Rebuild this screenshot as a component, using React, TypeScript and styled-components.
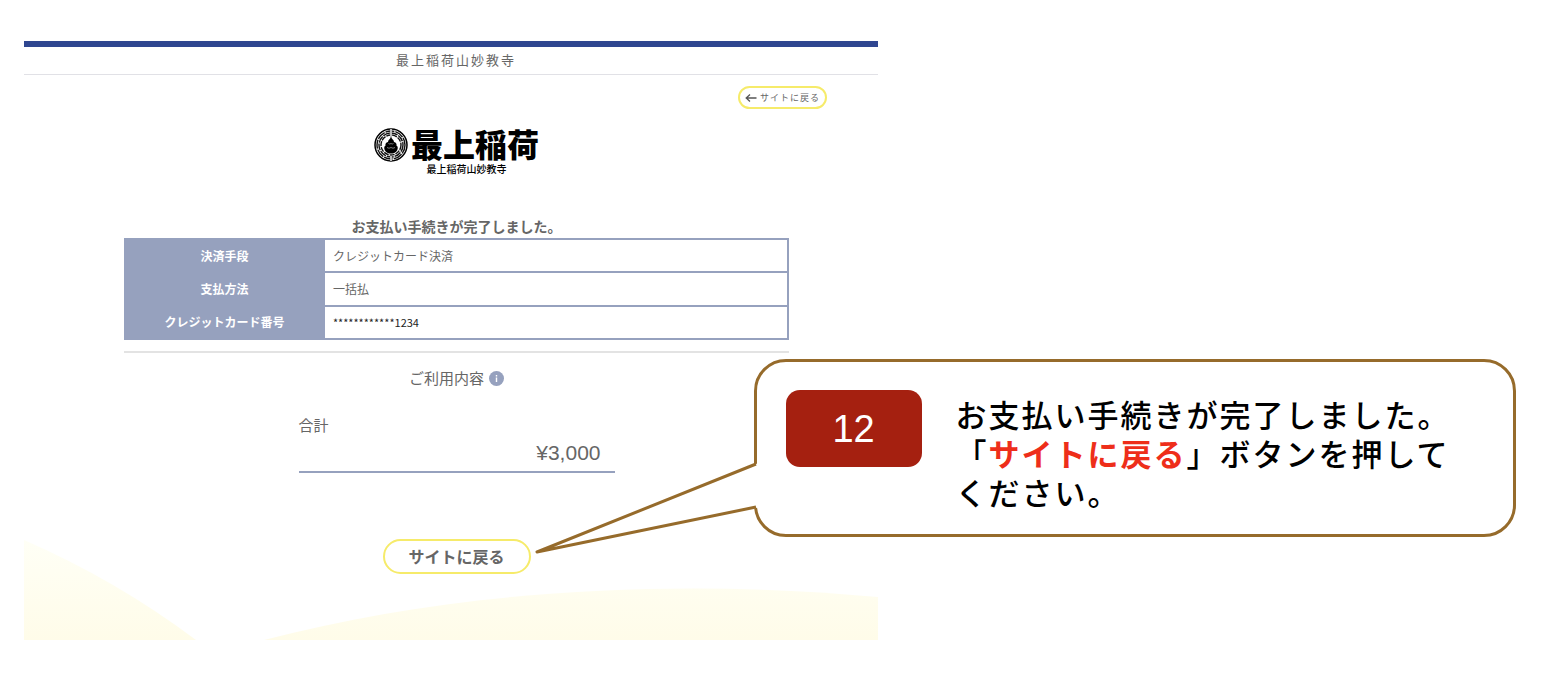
import React from 'react';
import styled, { createGlobalStyle } from 'styled-components';

const color = {
  navy: '#2f4690',
  slate: '#96a1be',
  text: '#666666',
  yellow: '#f6eb6a',
  brown: '#966b2b',
  badge: '#a52010',
  red: '#ee2e1a',
};

const GlobalStyle = createGlobalStyle`
  * { box-sizing: border-box; }
  body {
    margin: 0;
    background: #ffffff;
    color: ${color.text};
    font-family: "Noto Sans CJK JP", sans-serif;
  }
`;

const Slide = styled.div`
  position: relative;
  display: grid;
  grid-template-columns: 427fr 323fr;
  padding: 41px 24px 40px;
`;

const Screen = styled.main`
  position: relative;
  display: flex;
  flex-direction: column;
  padding-bottom: 66px;
  isolation: isolate;
`;

const Waves = styled.svg`
  position: absolute;
  left: 0;
  bottom: 0;
  width: 100%;
  height: 100px;
  z-index: -1;
`;

const SiteHeader = styled.header`
  border-top: 6px solid ${color.navy};
  border-bottom: 1px solid #e1e1e6;
  padding: 0 0 2px 10px;
  font-size: 13px;
  line-height: 25px;
  letter-spacing: 2px;
  text-align: center;
`;

const Toolbar = styled.nav`
  display: flex;
  justify-content: flex-end;
  padding: 11px 51px 0 0;
`;

const PillButton = styled.button<{ $large?: boolean }>`
  display: inline-flex;
  align-items: center;
  justify-content: center;
  gap: 3px;
  width: ${(p) => (p.$large ? 148 : 89)}px;
  height: ${(p) => (p.$large ? 35 : 23)}px;
  padding: 0 0 ${(p) => (p.$large ? 2 : 0)}px;
  border: 2px solid ${color.yellow};
  border-radius: 18px;
  background: #ffffff;
  color: ${color.text};
  font-family: inherit;
  font-size: ${(p) => (p.$large ? 16 : 9)}px;
  font-weight: ${(p) => (p.$large ? 700 : 400)};
  letter-spacing: ${(p) => (p.$large ? 0 : 1)}px;
  white-space: nowrap;
`;

const Content = styled.div`
  display: flex;
  flex-direction: column;
  align-items: center;
  padding: 19px 89px 0 100px;
`;

const Logo = styled.div`
  display: flex;
  flex-direction: column;
  align-items: center;
  color: #000000;
`;

const LogoRow = styled.div`
  display: flex;
  align-items: center;
  gap: 3px;
  height: 34px;
`;

const LogoName = styled.span`
  padding-bottom: 4px;
  font-size: 32px;
  font-weight: 900;
  line-height: 32px;
  white-space: nowrap;
`;

const LogoCaption = styled.span`
  margin-left: 20px;
  font-size: 10px;
  font-weight: 500;
  line-height: 14px;
`;

const Message = styled.h1`
  margin: 40px 0 0;
  padding-bottom: 2px;
  font-size: 14px;
  font-weight: 700;
  line-height: 20px;
`;

const PaymentTable = styled.table`
  width: 100%;
  height: 102px;
  border-collapse: collapse;
  border: 2px solid ${color.slate};
  font-size: 12px;
  line-height: 18px;
`;

const Label = styled.th`
  width: 30%;
  padding: 0;
  background: ${color.slate};
  color: #ffffff;
  font-weight: 700;
`;

const Value = styled.td<{ $number?: boolean }>`
  padding: 0 8px;
  border: 2px solid ${color.slate};
  color: ${(p) => (p.$number ? '#222222' : color.text)};
  font-size: ${(p) => (p.$number ? 11 : 12)}px;
`;

const Divider = styled.hr`
  width: 100%;
  height: 2px;
  margin: 11px 0 0;
  border: 0;
  background: #e3e3e3;
`;

const UsageTitle = styled.h2`
  display: flex;
  align-items: center;
  gap: 5px;
  margin: 14px 0 0;
  font-size: 15px;
  font-weight: 400;
  line-height: 22px;
`;

const Total = styled.dl`
  display: flex;
  flex-direction: column;
  width: 316px;
  margin: 25px 0 66px;
  border-bottom: 2px solid ${color.slate};
`;

const TotalLabel = styled.dt`
  font-size: 15px;
  line-height: 22px;
`;

const TotalAmount = styled.dd`
  margin: 0;
  padding: 5px 14px 6px 0;
  font-family: "Liberation Sans", Arial, sans-serif;
  font-size: 21px;
  line-height: 24px;
  text-align: right;
`;

const Callout = styled.aside`
  position: absolute;
  top: 359px;
  left: 49%;
  right: 32px;
  display: flex;
  align-items: flex-start;
  gap: 34px;
  min-height: 178px;
  margin-left: -5px;
  padding: 28px 29px 20px;
  border: 3px solid ${color.brown};
  border-radius: 32px;
  background: #ffffff;
`;

const Tail = styled.svg`
  position: absolute;
  top: 96px;
  right: 100%;
  width: 220px;
  height: 96px;
  overflow: visible;
`;

const StepBadge = styled.span`
  flex: none;
  width: 136px;
  padding-top: 2px;
  border-radius: 14px;
  background: ${color.badge};
  color: #ffffff;
  font-family: "Liberation Sans", Arial, sans-serif;
  font-size: 38px;
  line-height: 75px;
  text-align: center;
`;

const Instruction = styled.p`
  margin: 4px 0 0;
  color: #000000;
  font-size: 31px;
  font-weight: 500;
  line-height: 39px;
  letter-spacing: 2px;
  white-space: nowrap;
`;

const Highlight = styled.strong`
  color: ${color.red};
  font-weight: 700;
`;

const rings = [
  { r: 14, dash: '9 1' },
  { r: 12, dash: '7 1' },
  { r: 10, dash: '5 1' },
];

function Emblem() {
  return (
    <svg width="34" height="34" viewBox="0 0 34 34" aria-hidden="true">
      <circle cx="17" cy="17" r="16" fill="#fff" stroke="#000" strokeWidth="1.5" />
      {rings.map((ring) => (
        <circle
          key={ring.r}
          cx="17"
          cy="17"
          r={ring.r}
          fill="none"
          stroke="#111"
          strokeWidth="1.4"
          strokeDasharray={ring.dash}
        />
      ))}
      <path d="M17 1v9M17 28v5" stroke="#fff" strokeWidth="2" />
      <path d="M17 1v9M17 28v5" stroke="#444" strokeWidth="0.7" />
      <circle cx="17" cy="18.5" r="7.6" fill="#fff" />
      <path
        d="M17 9c.6 2 3 2.800 3 5 2.200.4 3 2.200 2.400 3.600 1.600.9 1.700 2.900.8 4.600-1.100 2.200-3.500 3.400-6.200 3.400s-5.100-1.200-6.200-3.400c-.9-1.700-.8-3.700.8-4.600-.6-1.400.2-3.200 2.400-3.600 0-2.200 2.400-3 3-5z"
        fill="#000"
      />
      <path d="M13 19.500q2 1.500 4 0q2 1.500 4 0M14.500 15.500q1.200 1 2.500 0q1.200 1 2.500 0" fill="none" stroke="#aaa" strokeWidth="0.7" />
    </svg>
  );
}

function BackArrow() {
  return (
    <svg width="12" height="10" viewBox="0 0 12 10" aria-hidden="true">
      <path d="M11.500 5H1.200M5 1.500L1.200 5L5 8.500" fill="none" stroke="#555" strokeWidth="1.3" />
    </svg>
  );
}

function InfoIcon() {
  return (
    <svg width="15" height="15" viewBox="0 0 15 15" role="img" aria-label="詳細">
      <circle cx="7.5" cy="7.5" r="7.5" fill={color.slate} />
      <path d="M7.500 6.500v4.500M7.500 4v1.500" stroke="#fff" strokeWidth="1.4" />
    </svg>
  );
}

const details = [
  { label: '決済手段', value: 'クレジットカード決済' },
  { label: '支払方法', value: '一括払' },
  { label: 'クレジットカード番号', value: '************1234', number: true },
];

export default function App() {
  return (
    <>
      <GlobalStyle />
      <Slide>
        <Screen>
          <Waves viewBox="0 0 854 100" preserveAspectRatio="none" aria-hidden="true">
            <defs>
              <linearGradient id="cream" x1="0" y1="0" x2="0" y2="100" gradientUnits="userSpaceOnUse">
                <stop offset="0" stopColor="#fffff6" />
                <stop offset="1" stopColor="#fffce9" />
              </linearGradient>
            </defs>
            <path d="M0 0Q92 40 172 100H0Z" fill="url(#cream)" />
            <path d="M240 100C430 50 650 38 854 57V100Z" fill="url(#cream)" />
          </Waves>
          <SiteHeader>最上稲荷山妙教寺</SiteHeader>
          <Toolbar>
            <PillButton type="button">
              <BackArrow />
              サイトに戻る
            </PillButton>
          </Toolbar>
          <Content>
            <Logo>
              <LogoRow>
                <Emblem />
                <LogoName>最上稲荷</LogoName>
              </LogoRow>
              <LogoCaption>最上稲荷山妙教寺</LogoCaption>
            </Logo>
            <Message>お支払い手続きが完了しました。</Message>
            <PaymentTable>
              <tbody>
                {details.map((row) => (
                  <tr key={row.label}>
                    <Label scope="row">{row.label}</Label>
                    <Value $number={row.number}>{row.value}</Value>
                  </tr>
                ))}
              </tbody>
            </PaymentTable>
            <Divider />
            <UsageTitle>
              ご利用内容
              <InfoIcon />
            </UsageTitle>
            <Total>
              <TotalLabel>合計</TotalLabel>
              <TotalAmount>¥3,000</TotalAmount>
            </Total>
            <PillButton type="button" $large>
              サイトに戻る
            </PillButton>
          </Content>
        </Screen>
        <Callout>
          <Tail viewBox="0 0 220 96" aria-hidden="true">
            <path d="M224 4L0 94L224 49Z" fill="#fff" />
            <path d="M219 6L0 94L219 49" fill="none" stroke={color.brown} strokeWidth="3" strokeLinejoin="round" />
          </Tail>
          <StepBadge>12</StepBadge>
          <Instruction>
            お支払い手続きが完了しました。
            <br />
            「<Highlight>サイトに戻る</Highlight>」ボタンを押して
            <br />
            ください。
          </Instruction>
        </Callout>
      </Slide>
    </>
  );
}
